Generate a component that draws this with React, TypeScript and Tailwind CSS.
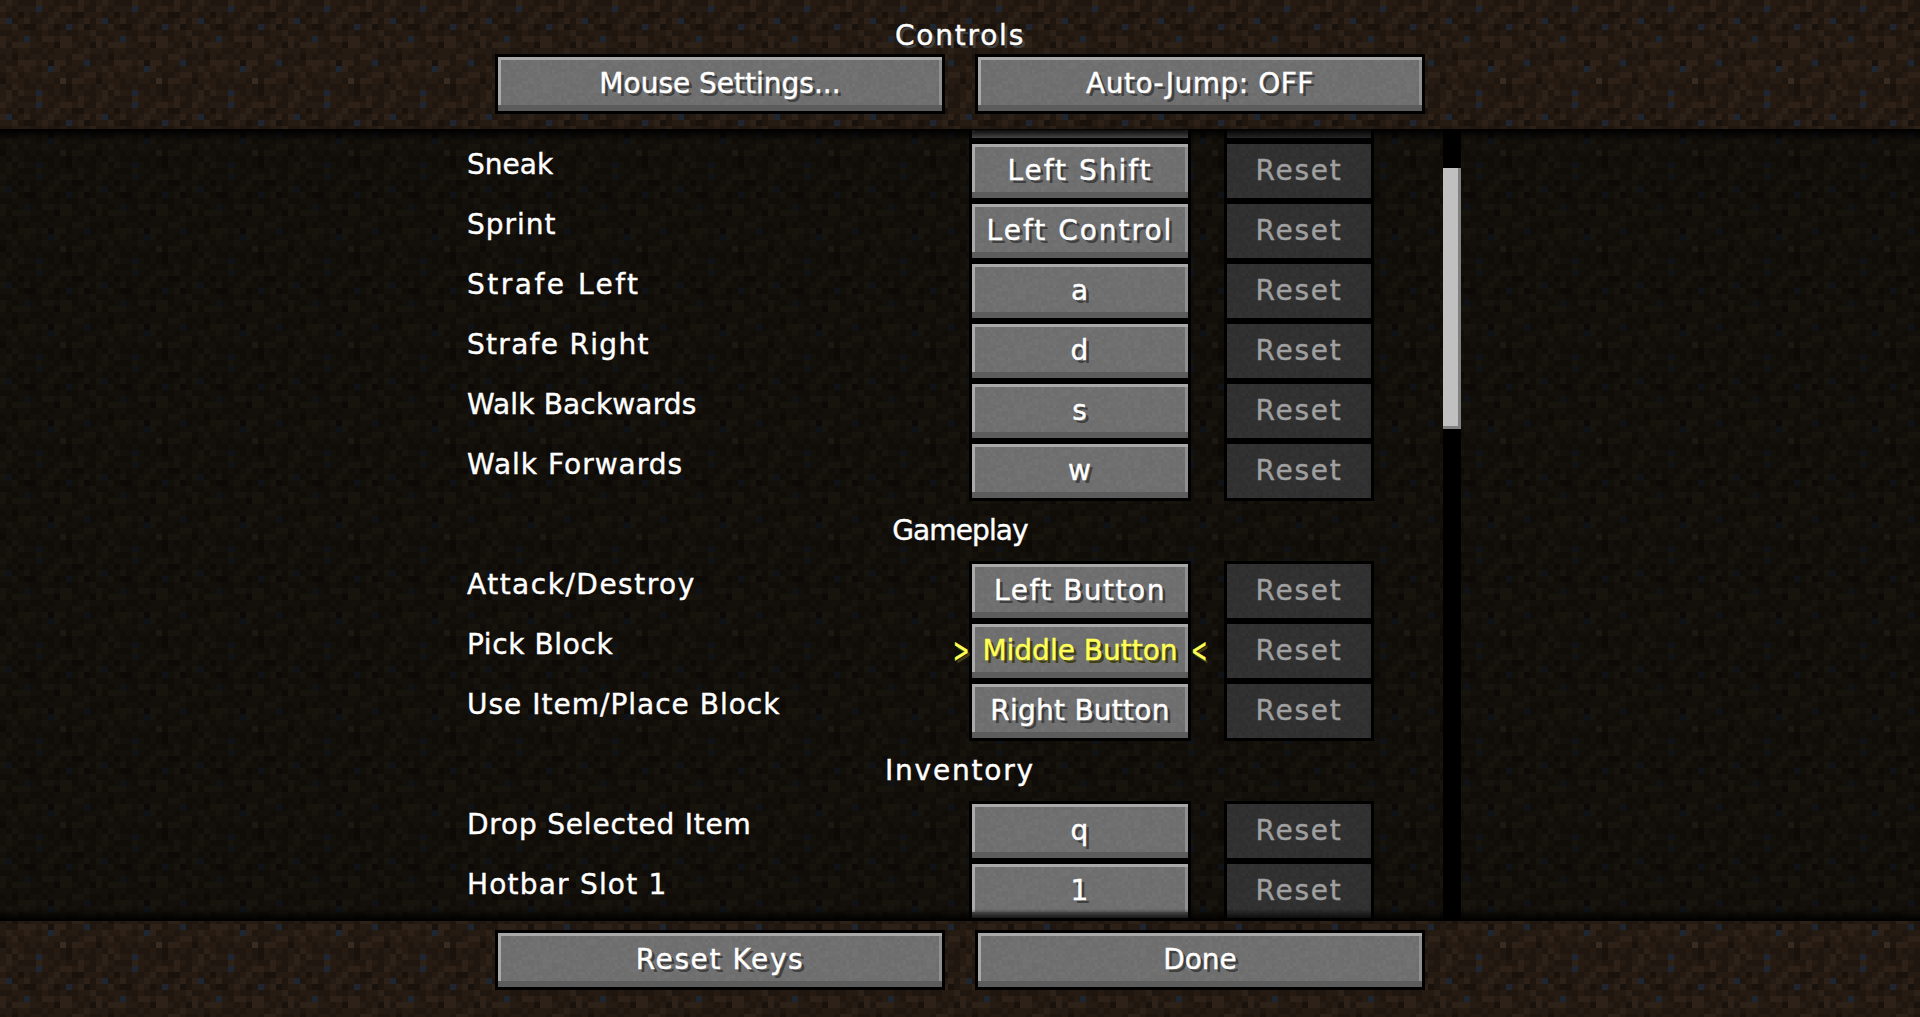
const DIRT = [
  "2321113221211321",
  "3212226212332311",
  "2120212123120022",
  "3612311232211231",
  "2231002320162301",
  "1122211211211223",
  "3212621332331212",
  "3133322120332120",
  "2212211212221232",
  "1202122122213321",
  "2113332303312261",
  "2322321263122122",
  "1231222322211233",
  "0222121221413322",
  "2132112112102121",
  "2313226212102211",
];

const DIRT_LIGHT = ["#18110c", "#1f160f", "#261b13", "#2d2118", "#3a2b20", "", "#1e2631"];
const DIRT_DARK = ["#0c0906", "#100c08", "#13100b", "#17130d", "#1e1810", "", "#0f1318"];

// tiny seeded noise for the stone button texture
function stoneCells(palette: string[]) {
  let seed = 1337;
  const cells = [];
  for (let y = 0; y < 20; y++) {
    for (let x = 0; x < 64; x++) {
      seed = (seed * 1103515245 + 12345) & 0x7fffffff;
      const fill = palette[(seed >> 16) % palette.length];
      cells.push(<rect key={x + "-" + y} x={x * 3} y={y * 3} width="3" height="3" fill={fill} />);
    }
  }
  return cells;
}

function Dirt({ id, palette, offsetY }: { id: string; palette: string[]; offsetY: number }) {
  return (
    <svg className="absolute inset-0 w-full h-full" aria-hidden="true">
      <defs>
        <pattern id={id} width="96" height="96" y={offsetY} patternUnits="userSpaceOnUse">
          {DIRT.map((row, y) =>
            row.split("").map((c, x) => (
              <rect key={x + "-" + y} x={x * 6} y={y * 6} width="6" height="6" fill={palette[Number(c)]} />
            ))
          )}
        </pattern>
      </defs>
      <rect width="100%" height="100%" fill={`url(#${id})`} />
    </svg>
  );
}

function StoneDefs() {
  return (
    <svg className="absolute w-0 h-0" aria-hidden="true">
      <defs>
        <pattern id="stone" width="192" height="60" patternUnits="userSpaceOnUse">
          {stoneCells(["#6d6d6d", "#6f6f6f", "#717171", "#737373", "#6e6e6e", "#707070"])}
        </pattern>
        <pattern id="stone-off" width="192" height="60" patternUnits="userSpaceOnUse">
          {stoneCells(["#2f2f2f", "#303030", "#323232", "#333333", "#2e2e2e", "#313131"])}
        </pattern>
      </defs>
    </svg>
  );
}

function McButton({
  label,
  className,
  disabled,
  active,
  textClass,
}: {
  label: React.ReactNode;
  className: string;
  disabled?: boolean;
  active?: boolean;
  textClass?: string;
}) {
  let tone = "text-white [text-shadow:3px_3px_0_#3f3f3f]";
  if (disabled) tone = "text-[#a0a0a0]";
  if (active) tone = "text-[#ffff55] [text-shadow:3px_3px_0_#3f3f15] gap-[13px]";

  return (
    <div className={"relative shrink-0 border-[3px] border-black " + className}>
      <svg className="absolute inset-0 w-full h-full" aria-hidden="true">
        <rect width="100%" height="100%" fill={disabled ? "url(#stone-off)" : "url(#stone)"} />
      </svg>
      {!disabled && (
        <div className="absolute inset-0 shadow-[inset_0_-6px_0_#5c5c5c,inset_3px_3px_0_#a9a9a9,inset_-3px_0_0_#8f8f8f]"></div>
      )}
      <div
        className={
          "relative h-full flex items-center justify-center whitespace-nowrap pb-[1px] " +
          tone +
          " " +
          (textClass || "")
        }
      >
        {label}
      </div>
    </div>
  );
}

type Row =
  | { header: string; track: string }
  | { name: string; nameTrack: string; key: string; keyTrack: string; active?: boolean };

const rows: Row[] = [
  { name: "Jump", nameTrack: "tracking-[1px]", key: "space", keyTrack: "tracking-[1px]" },
  { name: "Sneak", nameTrack: "tracking-[0px]", key: "Left Shift", keyTrack: "tracking-[2px]" },
  { name: "Sprint", nameTrack: "tracking-[1px]", key: "Left Control", keyTrack: "tracking-[2px]" },
  { name: "Strafe Left", nameTrack: "tracking-[2.5px]", key: "a", keyTrack: "tracking-[1px]" },
  { name: "Strafe Right", nameTrack: "tracking-[1.3px]", key: "d", keyTrack: "tracking-[1px]" },
  { name: "Walk Backwards", nameTrack: "tracking-[0.15px]", key: "s", keyTrack: "tracking-[1px]" },
  { name: "Walk Forwards", nameTrack: "tracking-[1px]", key: "w", keyTrack: "tracking-[1px]" },
  { header: "Gameplay", track: "tracking-[-0.9px]" },
  { name: "Attack/Destroy", nameTrack: "tracking-[1.5px]", key: "Left Button", keyTrack: "tracking-[1.5px]" },
  { name: "Pick Block", nameTrack: "tracking-[0.6px]", key: "Middle Button", keyTrack: "tracking-[0px]", active: true },
  { name: "Use Item/Place Block", nameTrack: "tracking-[1px]", key: "Right Button", keyTrack: "tracking-[0.25px]" },
  { header: "Inventory", track: "tracking-[1.8px]" },
  { name: "Drop Selected Item", nameTrack: "tracking-[0.8px]", key: "q", keyTrack: "tracking-[1px]" },
  { name: "Hotbar Slot 1", nameTrack: "tracking-[1.2px]", key: "1", keyTrack: "tracking-[1px]" },
];

export default function App() {
  return (
    <div className="w-[1920px] h-[1017px] overflow-hidden flex flex-col bg-black text-[28px] leading-[24px] font-['DejaVu_Sans',sans-serif] text-white [-webkit-text-stroke:0.4px]">
      <StoneDefs />

      {/* header */}
      <header className="relative h-[129px] shrink-0">
        <Dirt id="dirt-top" palette={DIRT_LIGHT} offsetY={0} />
        <div className="relative flex flex-col items-center pt-[24px]">
          <h1 className="h-[30px] font-normal [text-shadow:3px_3px_0_#3f3f3f] tracking-[1.8px]">Controls</h1>
          <div className="flex gap-[30px]">
            <McButton label="Mouse Settings..." className="w-[450px] h-[60px]" textClass="tracking-[0px]" />
            <McButton label="Auto-Jump: OFF" className="w-[450px] h-[60px]" textClass="tracking-[0.5px]" />
          </div>
        </div>
      </header>

      {/* key list */}
      <main className="relative flex-1 overflow-hidden flex">
        <Dirt id="dirt-list" palette={DIRT_DARK} offsetY={39} />
        <div className="relative w-[906px] ml-[468px] -mt-[48px] shrink-0">
          {rows.map((row) =>
            "header" in row ? (
              <div key={row.header} className={"h-[60px] pt-[18px] text-center pl-[78px] " + row.track}>
                {row.header}
              </div>
            ) : (
              <div key={row.name} className="h-[60px] flex">
                <div className={"-ml-[1px] w-[502px] pt-[12px] whitespace-nowrap " + row.nameTrack}>
                  {row.name}
                </div>
                <McButton
                  className="w-[222px] h-[60px]"
                  active={row.active}
                  textClass={row.keyTrack}
                  label={
                    row.active ? (
                      <>
                        <span className="inline-block origin-right scale-x-[0.7] scale-y-[1.2]">{">"}</span>
                        <span>{row.key}</span>
                        <span className="inline-block origin-left scale-x-[0.7] scale-y-[1.2]">{"<"}</span>
                      </>
                    ) : (
                      row.key
                    )
                  }
                />
                <McButton label="Reset" disabled className="ml-[33px] w-[150px] h-[60px]" textClass="tracking-[1.8px]" />
              </div>
            )
          )}
        </div>

        {/* scrollbar */}
        <div className="relative ml-[69px] w-[18px] shrink-0 bg-black">
          <div className="mt-[39px] h-[261px] bg-[#808080] pr-[3px] pb-[3px]">
            <div className="h-full bg-[#c0c0c0]"></div>
          </div>
        </div>

        <div className="absolute top-0 inset-x-0 h-[12px] bg-gradient-to-b from-black to-transparent"></div>
        <div className="absolute bottom-0 inset-x-0 h-[12px] bg-gradient-to-t from-black to-transparent"></div>
      </main>

      {/* footer */}
      <footer className="relative h-[96px] shrink-0">
        <Dirt id="dirt-bottom" palette={DIRT_LIGHT} offsetY={39} />
        <div className="relative flex justify-center gap-[30px] pt-[9px]">
          <McButton label="Reset Keys" className="w-[450px] h-[60px]" textClass="tracking-[1.6px]" />
          <McButton label="Done" className="w-[450px] h-[60px]" textClass="tracking-[0px]" />
        </div>
      </footer>
    </div>
  );
}
